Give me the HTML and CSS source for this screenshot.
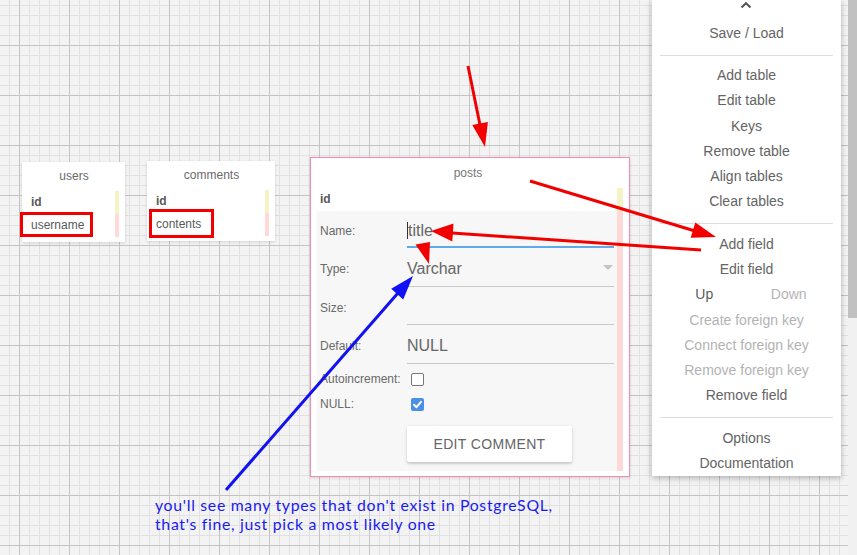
FILE: index.html
```html
<!DOCTYPE html>
<html>
<head>
<meta charset="utf-8">
<link rel="stylesheet" href="styles.css">
</head>
<body>
<div class="app">
  <div class="canvas">
    <div class="tcard t-users">
      <div class="t-title">users</div>
      <div class="t-field key">id</div>
      <div class="t-field">username</div>
    </div>
    <div class="tcard t-comments">
      <div class="t-title">comments</div>
      <div class="t-field key">id</div>
      <div class="t-field">contents</div>
    </div>
    <div class="tcard t-posts">
      <div class="t-title posts-title">posts</div>
      <div class="t-field key wide">id</div>
      <div class="editor">
        <div class="frow first">
          <div class="flabel">Name:</div>
          <div class="fval focused"><span class="caret"></span>title</div>
        </div>
        <div class="frow">
          <div class="flabel">Type:</div>
          <div class="fval select">Varchar<span class="tri"></span></div>
        </div>
        <div class="frow">
          <div class="flabel">Size:</div>
          <div class="fval"></div>
        </div>
        <div class="frow">
          <div class="flabel">Default:</div>
          <div class="fval">NULL</div>
        </div>
        <div class="crow first-check">
          <div class="flabel">Autoincrement:</div>
          <span class="cbox"></span>
        </div>
        <div class="crow">
          <div class="flabel">NULL:</div>
          <span class="cbox checked"><svg viewBox="0 0 13 13" width="13" height="13"><path d="M3 6.8 L5.5 9.2 L10 3.8" fill="none" stroke="#fff" stroke-width="2" stroke-linecap="round" stroke-linejoin="round"/></svg></span>
        </div>
        <div class="btn-row"><button class="btn">Edit comment</button></div>
      </div>
    </div>

    <div class="mark mark-users"></div>
    <div class="mark mark-comments"></div>

    <div class="note"><div class="note-line">you'll see many types that don't exist in PostgreSQL,</div><div class="note-line">that's fine, just pick a most likely one</div></div>

    <div class="menu">
      <div class="chev"><svg width="12" height="8" viewBox="0 0 12 8"><path d="M1.5 6.5 L6 2.2 L10.5 6.5" fill="none" stroke="#555" stroke-width="2"/></svg></div>
      <div class="mi">Save / Load</div>
      <div class="sep"></div>
      <div class="mi">Add table</div>
      <div class="mi">Edit table</div>
      <div class="mi">Keys</div>
      <div class="mi">Remove table</div>
      <div class="mi">Align tables</div>
      <div class="mi">Clear tables</div>
      <div class="sep"></div>
      <div class="mi">Add field</div>
      <div class="mi">Edit field</div>
      <div class="mi pair"><span class="dark">Up</span><span class="off">Down</span></div>
      <div class="mi off">Create foreign key</div>
      <div class="mi off">Connect foreign key</div>
      <div class="mi off">Remove foreign key</div>
      <div class="mi">Remove field</div>
      <div class="sep"></div>
      <div class="mi">Options</div>
      <div class="mi">Documentation</div>
    </div>

    <svg class="arrows" width="848" height="555" viewBox="0 0 848 555">
      <g stroke="#f20000" stroke-width="3" fill="#f20000">
        <line x1="468" y1="66" x2="480" y2="125"/>
        <polygon points="485,147 487.9,121.9 472.3,125.1" stroke="none"/>
        <line x1="530" y1="181" x2="695" y2="231"/>
        <polygon points="716,237 690.7,237.8 695.3,222.4" stroke="none"/>
        <line x1="701" y1="250" x2="452" y2="233"/>
        <polygon points="431,231 453.5,223.5 452.3,241.5" stroke="none"/>
        <polygon points="429,264 415.5,244.5 430,242" stroke="none"/>
      </g>
      <g stroke="#1111f2" stroke-width="3" fill="#1111f2">
        <line x1="226" y1="490" x2="398" y2="293"/>
        <polygon points="413,276 403.2,299.4 391.2,288.8" stroke="none"/>
      </g>
    </svg>
  </div>
  <div class="scrollbar"><div class="thumb"></div></div>
</div>
</body>
</html>
```

FILE: styles.css
```css
* { box-sizing: border-box; }
html, body { margin: 0; padding: 0; }
body {
  width: 857px;
  height: 555px;
  overflow: hidden;
  font-family: "Liberation Sans", Arial, sans-serif;
  color: #666;
}
.app { display: flex; width: 857px; height: 555px; }
.canvas {
  position: relative;
  flex: 1;
  height: 555px;
  overflow: hidden;
  background-color: #f3f3f3;
  background-image:
    linear-gradient(to right, #c4c4c4 1px, transparent 1px),
    linear-gradient(to bottom, #c4c4c4 1px, transparent 1px),
    linear-gradient(to right, #e1e1e1 1px, transparent 1px),
    linear-gradient(to bottom, #e1e1e1 1px, transparent 1px);
  background-size: 50px 50px, 50px 50px, 10px 10px, 10px 10px;
  background-position: 19px 0, 0 45px, 9px 0, 0 5px;
}
.scrollbar { width: 9px; height: 555px; background: #f1f1f1; }
.thumb { height: 318px; background: #c1c1c1; }

/* table cards */
.tcard {
  position: absolute;
  background: #fff;
  padding: 0 6px 5px 7px;
  box-shadow: 0 1px 3px rgba(0,0,0,0.14);
  font-size: 12px;
}
.t-users { left: 22px; top: 162px; width: 103px; }
.t-comments { left: 147px; top: 161px; width: 128px; }
.t-posts {
  left: 310px; top: 157px; width: 320px;
  border: 1px solid #f38bb0;
  padding: 0 6px 5px 6px;
}
.t-title {
  height: 29px;
  line-height: 28px;
  text-align: center;
  color: #6a6a6a;
}
.posts-title { height: 30px; line-height: 30px; padding-right: 4px; color: #777; }
.t-field {
  height: 23px;
  line-height: 23px;
  padding-left: 2px;
  color: #5a5a5a;
  border-right: 4px solid #ffd8d8;
}
.t-field.key { font-weight: bold; border-right-color: #f3f3c6; }
.t-field.wide { border-right-width: 6px; padding-left: 3px; }

/* editor */
.editor {
  background: #f7f7f7;
  border-right: 6px solid #ffd8d8;
  padding: 0 3px 9px 3px;
}
.frow { display: flex; }
.flabel {
  width: 87px;
  flex: none;
  font-size: 12px;
  line-height: 22px;
  color: #6a6a6a;
  white-space: nowrap;
}
.frow .flabel, .frow .fval {
  padding-top: 10px;
  padding-bottom: 5.5px;
  border-bottom: 1px solid transparent;
}
.fval {
  flex: 1;
  position: relative;
  font-size: 16px;
  line-height: 22px;
  color: #666;
}
.frow .fval { border-bottom-color: #c9c9c9; }
.frow.first .flabel, .frow.first .fval {
  padding-top: 8.5px;
  padding-bottom: 4.5px;
  border-bottom-width: 2px;
}
.frow.first .fval { border-bottom-color: #5eaaeb; }
.caret {
  display: inline-block;
  width: 1px;
  height: 17px;
  background: #333;
  vertical-align: -3px;
  margin-right: 0;
}
.tri {
  position: absolute;
  right: 1px;
  top: 17px;
  width: 0; height: 0;
  border-left: 5px solid transparent;
  border-right: 5px solid transparent;
  border-top: 5px solid #c4c4c4;
}
.crow { display: flex; align-items: center; height: 25px; }
.crow.first-check { margin-top: 3px; }
.cbox {
  display: inline-block;
  width: 13px;
  height: 13px;
  margin-left: 4px;
  border: 1px solid #777;
  border-radius: 2px;
  background: #fff;
}
.cbox.checked {
  border: none;
  background: #4a90e6;
}
.cbox svg { display: block; }
.btn-row { padding-left: 87px; margin-top: 9.5px; }
.btn {
  display: block;
  width: 165px;
  height: 36px;
  border: none;
  border-radius: 2px;
  background: #fff;
  box-shadow: 0 2px 2px rgba(0,0,0,0.12), 0 1px 4px rgba(0,0,0,0.1);
  font-family: "Liberation Sans", Arial, sans-serif;
  font-size: 14px;
  letter-spacing: 0.35px;
  text-transform: uppercase;
  color: #666;
  padding: 0;
}

/* annotation boxes */
.mark { position: absolute; border: 3px solid #f20000; }
.mark-users { left: 20px; top: 212px; width: 73px; height: 25px; }
.mark-comments { left: 149px; top: 209px; width: 65px; height: 29px; }

.note {
  position: absolute;
  left: 155px;
  top: 494.5px;
  font-family: Lato, "Open Sans", sans-serif;
  font-size: 15.8px;
  letter-spacing: 0.7px;
  color: #1a1af0;
  white-space: nowrap;
}
.note-line { height: 19px; line-height: 19px; }

/* menu */
.menu {
  position: absolute;
  left: 652px;
  top: 0;
  width: 189px;
  background: #fff;
  box-shadow: 0 2px 6px rgba(0,0,0,0.28);
  padding: 0 8px;
  font-size: 14px;
  text-align: center;
  color: #646464;
}
.chev { height: 20.5px; display: flex; justify-content: center; padding-top: 1px; }
.chev svg { display: block; margin-left: -1px; }
.mi { height: 25.2px; line-height: 25.2px; white-space: nowrap; }
.mi.off, .off { color: #b3b3b3; }
.dark { color: #5c5c5c; }
.pair { display: flex; padding: 0 2px; }
.pair span { flex: 1; text-align: center; }
.sep { height: 1px; background: #dcdcdc; margin: 9px 0 7.6px; }

.arrows { position: absolute; left: 0; top: 0; pointer-events: none; }
```
